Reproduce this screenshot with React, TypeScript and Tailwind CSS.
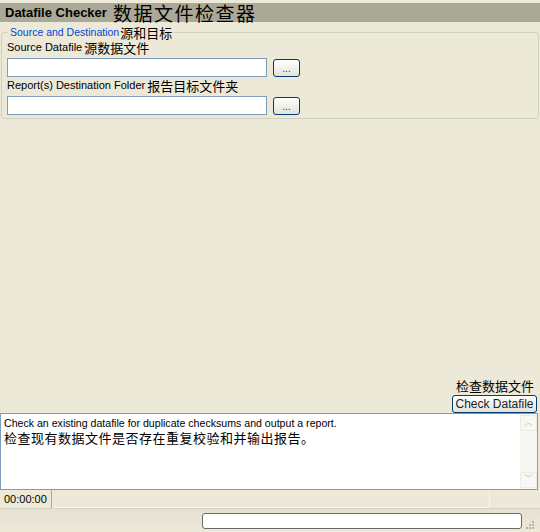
const ui = { fontFamily: '"Liberation Sans", "Noto Sans CJK SC", sans-serif' };
const cjk = { fontFamily: '"Noto Sans CJK SC", sans-serif' };

function Browse() {
  return (
    <button className="ml-[6px] flex h-[18px] w-[27px] items-end justify-center rounded-[3px] border border-[#003c74] bg-gradient-to-b from-white to-[#e3e3db] pb-[2px] text-[10px] leading-none text-[#333]">
      ...
    </button>
  );
}

function Field({ label, zh }: { label: string; zh: string }) {
  return (
    <div className="flex flex-col">
      <div className="flex h-[16px] items-center text-[11px] leading-none text-black">
        <span>{label}</span>
        <span style={cjk} className="ml-[2px] text-[13px] leading-none">{zh}</span>
      </div>
      <div className="mt-[3px] flex items-center">
        <div className="h-[19px] w-[260px] border border-[#7f9db9] bg-white" />
        <Browse />
      </div>
    </div>
  );
}

export default function App() {
  return (
    <div style={ui} className="flex h-[532px] w-[540px] flex-col bg-[#ece9d8]">
      <div className="mt-[3px] flex h-[19px] items-center bg-[#aaa897] pl-[5px]">
        <span className="text-[13px] font-bold text-black">Datafile Checker</span>
        <span style={cjk} className="ml-[6px] text-[19px] leading-[19px] tracking-[1.5px] text-black">数据文件检查器</span>
      </div>

      <div className="relative mx-[1px] mt-[10px] h-[87px] rounded-[3px] border border-[#d0d0bf] px-[5px] pt-[6px]">
        <div className="absolute left-[6px] top-[-7px] flex items-center bg-[#ece9d8] px-[2px] leading-none">
          <span className="text-[10.5px] text-[#0046d5]">Source and Destination</span>
          <span style={cjk} className="ml-[1px] text-[13px] leading-[13px] text-black">源和目标</span>
        </div>
        <Field label="Source Datafile" zh="源数据文件" />
        <Field label="Report(s) Destination Folder" zh="报告目标文件夹" />
      </div>

      <div className="flex-1" />

      <div className="flex flex-col items-end pr-[3px]">
        <span style={cjk} className="mr-[3px] text-[13px] leading-[15px] text-black">检查数据文件</span>
        <button className="mt-[2px] h-[18px] w-[85px] rounded-[3px] border border-[#003c74] bg-gradient-to-b from-white to-[#e3e3db] text-[12px] leading-none text-[#222]">
          Check Datafile
        </button>
      </div>

      <div className="mr-[2px] flex h-[77px] border border-[#7f9db9] bg-white">
        <div className="flex-1 pl-[3px] pt-[3px]">
          <div className="text-[10.6px] leading-[13px] text-black">Check an existing datafile for duplicate checksums and output a report.</div>
          <div style={cjk} className="text-[13px] leading-[15px] tracking-[0.5px] text-black">检查现有数据文件是否存在重复校验和并输出报告。</div>
        </div>
        <div className="flex w-[17px] flex-col justify-between bg-[#f7f7f3] py-[1px]">
          <div className="flex h-[16px] items-center justify-center border border-[#eeede5] text-[9px] text-[#c9c7ba]">︿</div>
          <div className="flex h-[16px] items-center justify-center border border-[#eeede5] text-[9px] text-[#c9c7ba]">﹀</div>
        </div>
      </div>

      <div className="flex h-[18px] items-stretch">
        <div className="flex w-[52px] items-center border-r border-[#aca899] pl-[4px] text-[11px] text-black">00:00:00</div>
        <div className="w-[438px] border-b border-r border-[#f6f5ee]" />
      </div>

      <div className="flex h-[24px] items-center border-t border-[#d6d2c2] bg-gradient-to-b from-[#e5e2d3] to-[#ece9d8]">
        <div className="ml-[202px] h-[16px] w-[320px] rounded-[3px] border border-[#686868] bg-white" />
        <div className="ml-[4px] mt-[8px] grid grid-cols-3 gap-[1px]">
          <span className="h-[2px] w-[2px]" />
          <span className="h-[2px] w-[2px]" />
          <span className="h-[2px] w-[2px] bg-[#b8b4a2]" />
          <span className="h-[2px] w-[2px]" />
          <span className="h-[2px] w-[2px] bg-[#b8b4a2]" />
          <span className="h-[2px] w-[2px] bg-[#b8b4a2]" />
          <span className="h-[2px] w-[2px] bg-[#b8b4a2]" />
          <span className="h-[2px] w-[2px] bg-[#b8b4a2]" />
          <span className="h-[2px] w-[2px] bg-[#b8b4a2]" />
        </div>
      </div>
    </div>
  );
}
